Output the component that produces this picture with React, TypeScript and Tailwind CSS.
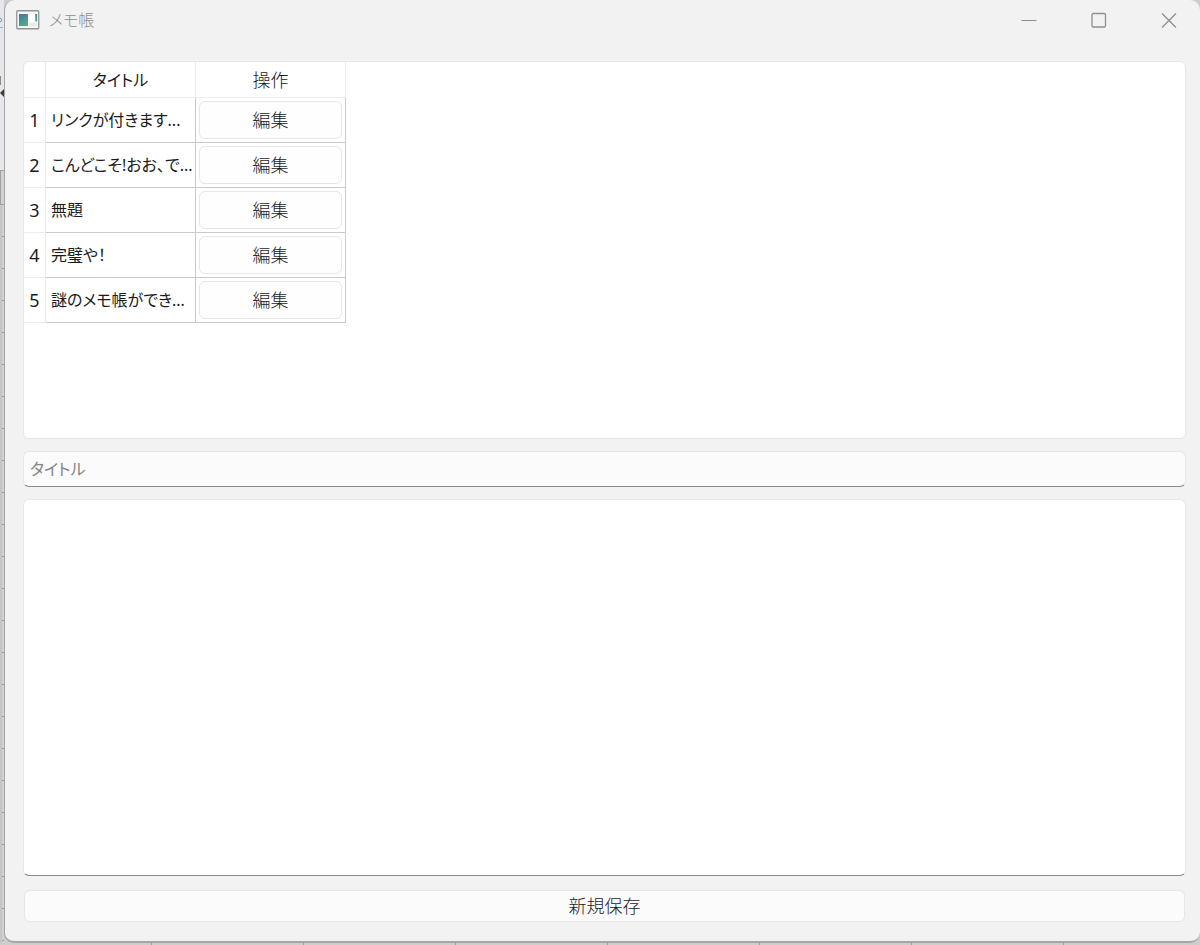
interface Memo {
  id: number
  title: string
}

const memos: Memo[] = [
  { id: 1, title: 'リンクが付きます...' },
  { id: 2, title: 'こんどこそ!おお、で...' },
  { id: 3, title: '無題' },
  { id: 4, title: '完璧や！' },
  { id: 5, title: '謎のメモ帳ができ...' },
]

const AppIcon = () => (
  <svg width="24" height="20" viewBox="0 0 24 20" aria-hidden="true">
    <defs>
      <linearGradient id="pane" x1="0" y1="0" x2="0.6" y2="1">
        <stop offset="0" stopColor="#3f73a8" />
        <stop offset="1" stopColor="#55ab80" />
      </linearGradient>
    </defs>
    <rect x="0.75" y="0.75" width="22" height="18" rx="1" fill="#f6f6f6" stroke="#8f9499" strokeWidth="1.3" />
    <rect x="3" y="4" width="9" height="12" fill="url(#pane)" />
    <rect x="13.5" y="4" width="5" height="8" fill="#fff" />
    <rect x="19.3" y="4" width="1.8" height="7.5" fill="url(#pane)" />
    <rect x="13.5" y="13" width="7.6" height="3" fill="#e9e9e9" />
  </svg>
)

const TitleBar = () => (
  <header className="flex h-10 shrink-0 items-center pr-px pl-[11px] text-[#8f8f8f]">
    <AppIcon />
    <h1 className="ml-[9px] flex-1 text-base">メモ帳</h1>
    <div className="flex gap-[10px]">
      <button type="button" aria-label="最小化" className="flex h-10 w-[60px] items-center justify-center">
        <svg width="16" height="16" viewBox="0 0 16 16" fill="none" stroke="currentColor">
          <path d="M0.5 8.5H15.5" />
        </svg>
      </button>
      <button type="button" aria-label="最大化" className="flex h-10 w-[60px] items-center justify-center">
        <svg width="16" height="16" viewBox="0 0 16 16" fill="none" stroke="currentColor" strokeWidth="1.3">
          <rect x="1" y="1.5" width="13.5" height="13.5" rx="1.2" />
        </svg>
      </button>
      <button type="button" aria-label="閉じる" className="flex h-10 w-[60px] items-center justify-center">
        <svg width="16" height="16" viewBox="0 0 16 16" fill="none" stroke="currentColor" strokeWidth="1.3">
          <path d="M1 1.5L15 15.5M15 1.5L1 15.5" />
        </svg>
      </button>
    </div>
  </header>
)

const MemoTable = () => (
  <table className="w-[322px] table-fixed border-separate border-spacing-0">
    <colgroup>
      <col className="w-[22px]" />
      <col className="w-[150px]" />
      <col className="w-[150px]" />
    </colgroup>
    <thead>
      <tr className="h-9">
        <td className="border-r border-b border-[#ececec]" />
        <th scope="col" className="border-r border-b border-[#ececec] p-0 text-base font-normal">
          タイトル
        </th>
        <th scope="col" className="border-r border-b border-[#ececec] p-0 font-light">
          操作
        </th>
      </tr>
    </thead>
    <tbody>
      {memos.map((memo) => (
        <tr key={memo.id} className="h-[45px]">
          <th scope="row" className="border-r border-b border-[#ececec] p-0 font-normal">
            {memo.id}
          </th>
          <td className="border-r border-b border-[#cacaca] p-0 pl-[5px] text-base font-normal whitespace-nowrap">
            {memo.title}
          </td>
          <td className="border-r border-b border-[#cacaca] p-[3px]">
            <button
              type="button"
              aria-label={`編集 ${memo.title}`}
              className="block h-[38px] w-full rounded-md border border-[#e6e6e6] bg-[#fefefe]"
            >
              編集
            </button>
          </td>
        </tr>
      ))}
    </tbody>
  </table>
)

// Edge of the document that shows behind the window
const BackdropEdge = () => (
  <div className="flex w-1 shrink-0 flex-col" aria-hidden="true">
    <div className="h-[170px] bg-[#e6e7ea]">
      <svg width="4" height="170" viewBox="0 0 4 170" fill="none">
        <path d="M0 17.5L2 20.5L0 22" stroke="#6d8fb0" />
        <path d="M0 27.5H3" stroke="#8fb4dc" />
        <path d="M0.5 76V85" stroke="#8a8a8a" />
        <path d="M0 93L4 89V97Z" fill="#3c3c3c" />
      </svg>
    </div>
    <div className="h-[35px] border-y border-l border-[#a0a0a0] bg-[#d2d2d2]" />
    <div className="flex-1 border-l-2 border-[#c6c6c6] bg-[repeating-linear-gradient(to_bottom,#d0d0d0_0px,#d0d0d0_31px,#a0a0a0_31px,#a0a0a0_32px)]" />
  </div>
)

export default function App() {
  return (
    <div className="flex min-h-screen flex-col bg-[#cdcdcd] font-['Noto_Sans','Noto_Sans_CJK_JP',sans-serif] text-lg leading-6 font-light text-[#1b1b1b] [font-feature-settings:'palt']">
      <div className="flex flex-1">
        <BackdropEdge />
        <div className="flex min-w-0 flex-1 flex-col rounded-[10px] border-b-2 border-l border-[#a6a6a6] bg-[#f2f2f2]">
          <TitleBar />
          <main className="flex flex-1 flex-col pt-[21px] pr-[14px] pb-[19px] pl-[18px]">
            <section
              aria-label="メモ一覧"
              className="min-h-[300px] flex-1 basis-0 rounded-md border border-[#e6e6e6] bg-white"
            >
              <MemoTable />
            </section>
            <input
              type="text"
              aria-label="タイトル"
              placeholder="タイトル"
              className="mt-3 h-9 w-full rounded-md border border-[#e6e6e6] border-b-[#8a8a8a] bg-[#fbfbfb] px-[6px] text-base font-normal outline-none placeholder:text-[#858585]"
            />
            <textarea
              aria-label="本文"
              className="mt-3 min-h-[300px] w-full flex-1 basis-0 resize-none rounded-md border border-[#e6e6e6] border-b-[#8a8a8a] bg-white px-[6px] text-base font-normal outline-none"
            />
            <button type="button" className="mx-px mt-[14px] h-8 rounded-md border border-[#e6e6e6] bg-[#fbfbfb]">
              新規保存
            </button>
          </main>
        </div>
      </div>
      <div
        aria-hidden="true"
        className="h-[2px] bg-[repeating-linear-gradient(to_right,#cdcdcd_0px,#cdcdcd_151px,#a0a0a0_151px,#a0a0a0_152px)]"
      />
    </div>
  )
}
